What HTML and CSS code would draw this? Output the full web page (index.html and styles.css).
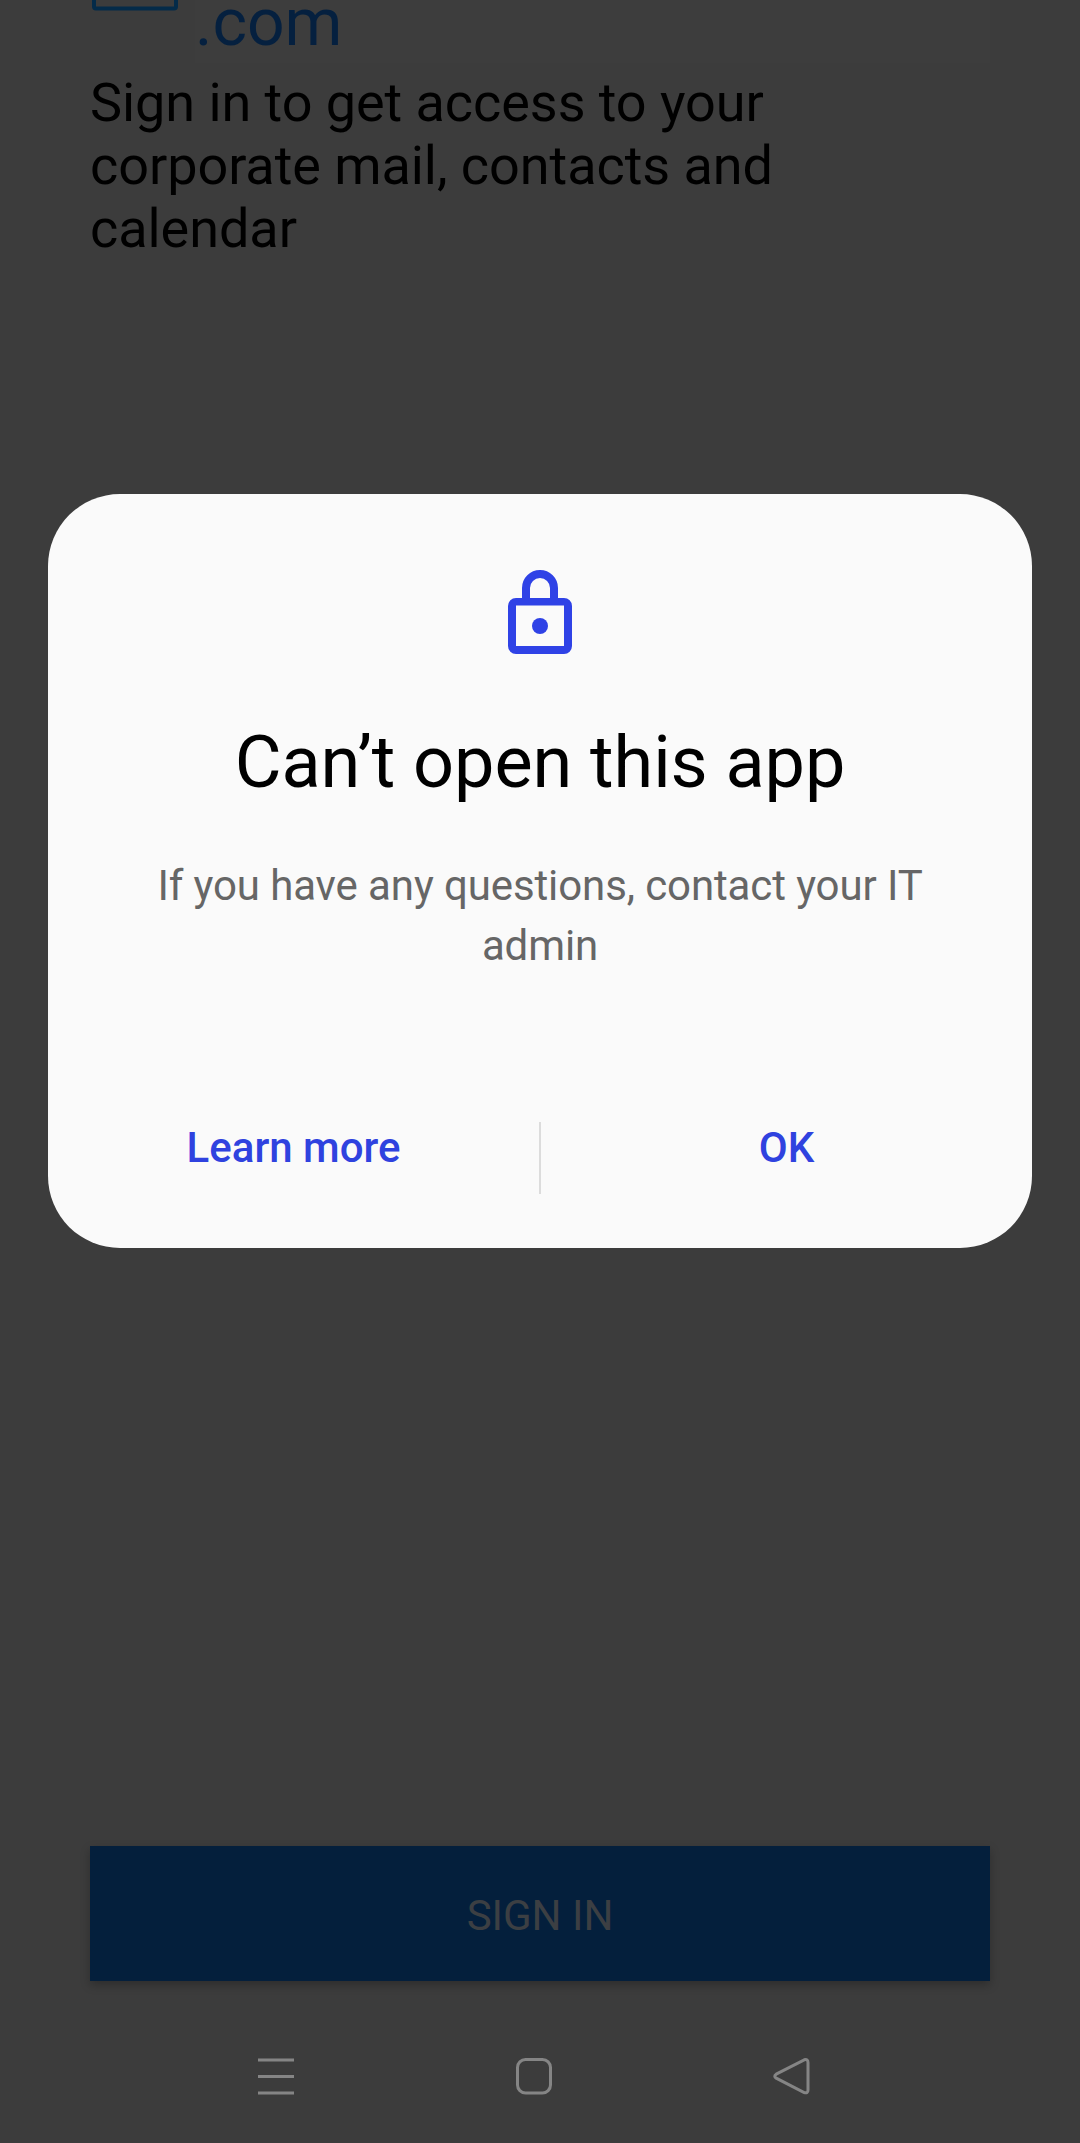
FILE: index.html
```html
<!DOCTYPE html>
<html lang="en">
<head>
<meta charset="utf-8">
<title>Sign in</title>
<link rel="stylesheet" href="styles.css">
</head>
<body>
<main class="screen">
  <header class="brand">
    <svg class="brand-icon" width="86" height="11" viewBox="0 0 86 11"><rect x="2" y="-50" width="82" height="58.500" rx="2" fill="none" stroke="#042b49" stroke-width="4"/></svg>
    <span class="brand-name">.com</span>
  </header>
  <p class="intro">Sign in to get access to your corporate mail, contacts and calendar</p>
  <button class="sign-in">SIGN IN</button>
  <nav class="nav">
    <svg width="38" height="38" viewBox="0 0 38 38"><path d="M1 3h36M1 19.5h36M1 36h36"/></svg>
    <svg width="38" height="38" viewBox="0 0 38 38"><rect x="2.5" y="2.5" width="33" height="33.5" rx="8"/></svg>
    <svg width="38" height="38" viewBox="0 0 38 38"><path d="M3.2 17.2 31.2 2.8Q35 1.800 35 5.500V33Q35 36.600 31.200 35.600L3.200 21.200Q.3 19.200 3.200 17.200Z"/></svg>
  </nav>
</main>
<section class="dialog" role="dialog">
  <svg class="lock" width="64" height="84" viewBox="0 0 64 84"><path d="M18 30V18a14 14 0 0 1 28 0v12" fill="none" stroke="#2f42e6" stroke-width="8"/><path fill="#2f42e6" fill-rule="evenodd" d="M8 28h48a8 8 0 0 1 8 8v40a8 8 0 0 1-8 8H8a8 8 0 0 1-8-8V36a8 8 0 0 1 8-8ZM8 35.500v40.500h48V35.500Z"/><circle cx="32" cy="56" r="8" fill="#2f42e6"/></svg>
  <h1 class="title">Can’t open this app</h1>
  <p class="message">If you have any questions, contact your IT admin</p>
  <div class="actions">
    <button class="action">Learn more</button>
    <span class="divider"></span>
    <button class="action">OK</button>
  </div>
</section>
</body>
</html>
```

FILE: styles.css
```css
* { box-sizing: border-box; }
body { margin: 0; background: #3c3c3c; font-family: Roboto, "Liberation Sans", sans-serif; }
button { margin: 0; padding: 0; border: 0; background: none; font: inherit; }
.screen { height: 2143px; display: flex; flex-direction: column; overflow: hidden; }
.brand { height: 63px; margin: 0 90px; padding-left: 2px; display: flex; gap: 17px; flex: none; }
.brand-icon { flex: none; }
.brand-name { flex: 1; height: 63px; background: #3d3d3d; color: #05203f; font-size: 66px; line-height: 46px; }
.intro { margin: 8px 290px 0 90px; color: #000; font-size: 54px; line-height: 63px; letter-spacing: -0.06px; }
.sign-in { margin: auto 90px 0; padding-top: 3px; height: 135px; flex: none; background: #041f3c; color: #3c3f43; font-size: 42px; box-shadow: 0 4px 9px rgba(0,0,0,.25); }
.nav { height: 162px; padding: 76px 269px 0 257px; display: flex; justify-content: space-between; flex: none; }
.nav svg { fill: none; stroke: #858585; stroke-width: 3; }
.dialog { position: absolute; left: 48px; top: 494px; width: 984px; height: 753.5px; border-radius: 72px; background: #fafafa; display: flex; flex-direction: column; align-items: center; padding-top: 76px; }
.lock { flex: none; }
.title { margin: 66px 0 0; font-size: 72px; line-height: 86px; font-weight: 400; color: #000; letter-spacing: -0.06px; }
.message { margin: 50px 90px 0; text-align: center; font-size: 42px; line-height: 60px; color: #666; letter-spacing: -0.11px; }
.actions { width: 100%; margin-top: 146px; display: flex; justify-content: center; }
.action { flex: 1; height: 52px; color: #2f42df; font-size: 42px; font-weight: 500; line-height: 52px; }
.divider { width: 2px; height: 72px; background: #dcdcdc; }
```
